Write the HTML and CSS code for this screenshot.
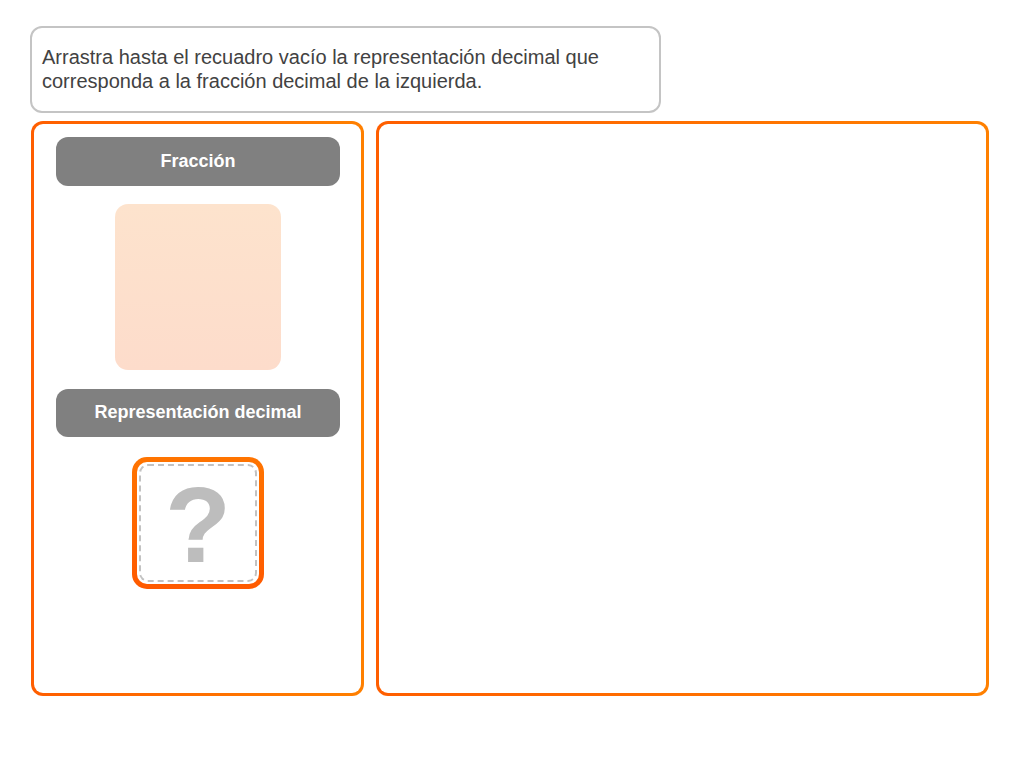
FILE: index.html
```
<!DOCTYPE html>
<html lang="es">
<head>
<meta charset="utf-8">
<title>Fracción decimal</title>
<link rel="stylesheet" href="styles.css">
</head>
<body>
<div class="page">
  <div class="instructions">
    <p>Arrastra hasta el recuadro vacío la representación decimal que corresponda a la fracción decimal de la izquierda.</p>
  </div>
  <div class="panels">
    <div class="panel panel-left">
      <div class="header">Fracción</div>
      <div class="fraction-box"></div>
      <div class="header header-rep">Representación decimal</div>
      <div class="drop-box">
        <div class="drop-inner"><span class="qmark">?</span></div>
      </div>
    </div>
    <div class="panel panel-right"></div>
  </div>
</div>
</body>
</html>
```
FILE: styles.css
```
html, body {
  margin: 0;
  padding: 0;
  background: #ffffff;
}
body {
  font-family: "Liberation Sans", Arial, sans-serif;
}
.page {
  padding: 26px 0 0 30px;
  display: flex;
  flex-direction: column;
  gap: 8px;
}
.instructions {
  width: 631px;
  height: 87px;
  box-sizing: border-box;
  border: 2px solid #c4c4c4;
  border-radius: 12px;
  padding: 17px 10px 0 10px;
}
.instructions p {
  margin: 0;
  font-size: 20px;
  line-height: 24px;
  color: #424242;
  width: 600px;
}
.panels {
  display: flex;
  gap: 12px;
  margin-left: 1px;
}
.panel {
  box-sizing: border-box;
  height: 575px;
  border: 3px solid transparent;
  border-radius: 12px;
  background: linear-gradient(#fff, #fff) padding-box,
              linear-gradient(to right, #ff5e00, #ff8000) border-box;
}
.panel-left {
  width: 333px;
  padding: 13px 0 0 22px;
  display: flex;
  flex-direction: column;
}
.panel-right {
  width: 613px;
}
.header {
  width: 284px;
  height: 49px;
  box-sizing: border-box;
  background: #808080;
  border-radius: 12px;
  color: #ffffff;
  font-weight: bold;
  font-size: 18px;
  display: flex;
  align-items: center;
  justify-content: center;
  padding-bottom: 1px;
}
.header-rep {
  height: 48px;
  margin-top: 19px;
}
.fraction-box {
  width: 166px;
  height: 166px;
  margin: 18px 0 0 59px;
  border-radius: 13px;
  background: linear-gradient(to bottom, #fde3cd, #fddccb);
}
.drop-box {
  width: 132px;
  height: 132px;
  box-sizing: border-box;
  margin: 20px 0 0 76px;
  border: 5px solid transparent;
  border-radius: 15px;
  background: linear-gradient(#fff, #fff) padding-box,
              linear-gradient(to bottom, #ff7400, #ff5a00) border-box;
  padding: 2px;
}
.drop-inner {
  width: 100%;
  height: 100%;
  box-sizing: border-box;
  border: 2px dashed #c2c2c2;
  border-radius: 9px;
  display: flex;
  align-items: center;
  justify-content: center;
}
.qmark {
  font-family: "Liberation Sans", Arial, sans-serif;
  font-weight: bold;
  font-size: 108px;
  line-height: 1;
  color: #bdbdbd;
  margin-top: 4px;
}
```
